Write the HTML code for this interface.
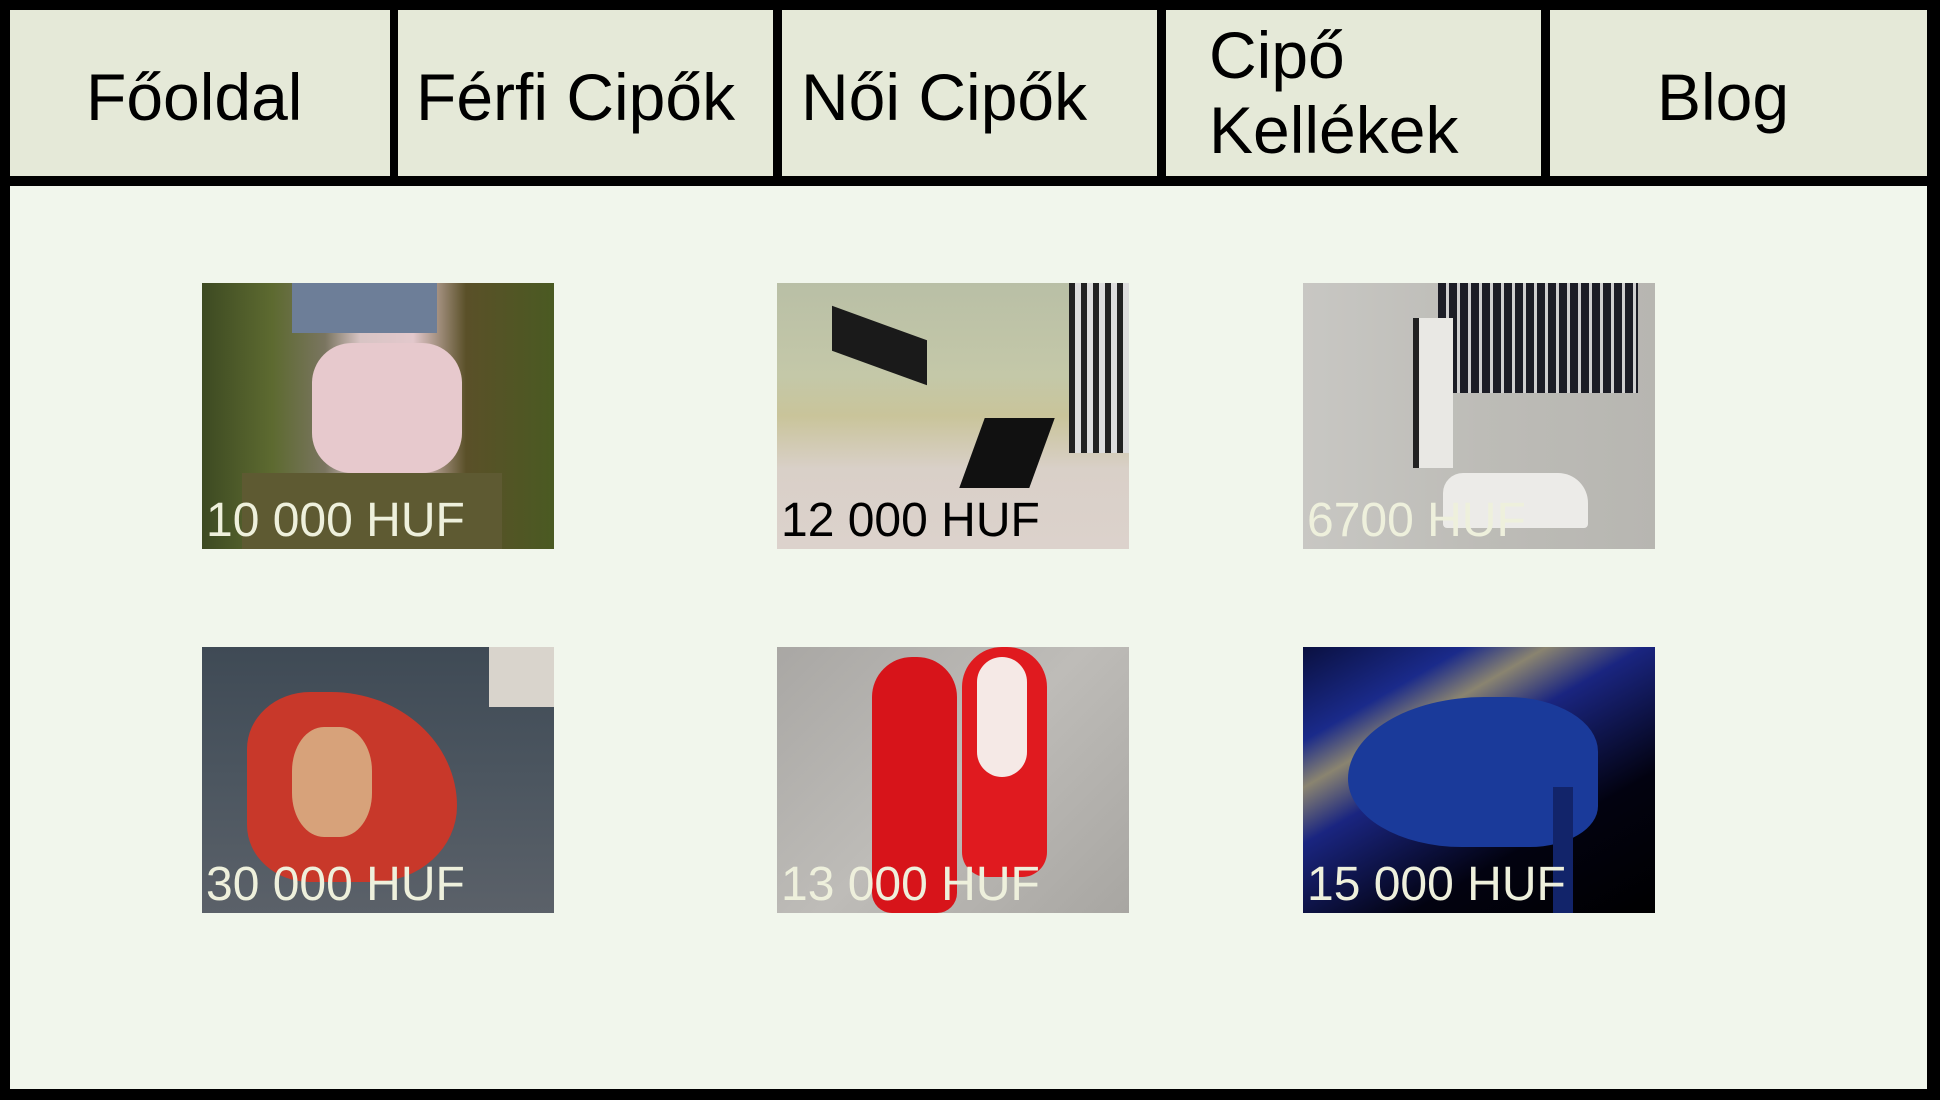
<!DOCTYPE html>
<html><head><meta charset="utf-8"><style>
*{margin:0;padding:0;box-sizing:border-box}
html,body{width:1940px;height:1100px;overflow:hidden;background:#000}
.frame{position:absolute;left:10px;top:10px;width:1917px;height:1079px;background:#000}
.main{position:absolute;left:0;top:176px;width:1917px;height:903px;background:#f1f6ec}
.nav{position:absolute;top:0;height:166px;background:#e5e9d8;font-family:"Liberation Sans",sans-serif;font-size:66px;color:#000;white-space:nowrap}
.nav span{position:absolute;top:50px;line-height:75px}
.bar{position:absolute;left:0;top:166px;width:1917px;height:10px;background:#000}
.img{position:absolute;width:352px;height:266px;overflow:hidden}
.p{position:absolute;left:4px;top:210px;font-family:"Liberation Sans",sans-serif;font-size:48px;color:#eef0dc;white-space:nowrap}
</style></head><body>
<div class="frame">
  <div class="nav" style="left:0;width:380px"><span style="left:76px">Főoldal</span></div>
  <div class="nav" style="left:388px;width:375px"><span style="left:18px">Férfi Cipők</span></div>
  <div class="nav" style="left:772px;width:375px"><span style="left:19px">Női Cipők</span></div>
  <div class="nav" style="left:1156px;width:375px"><span style="left:43px;top:8px">Cipő<br>Kellékek</span></div>
  <div class="nav" style="left:1540px;width:377px"><span style="left:107px">Blog</span></div>
  <div class="bar"></div>
  <div class="main">

  <div class="img" style="left:192px;top:97px;background:linear-gradient(90deg,#3d4a22 0%,#5d6a30 20%,#7a7560 35%,#d8c4c4 45%,#e3c8cc 60%,#5a5028 75%,#4a5a22 100%)">
    <div style="position:absolute;left:90px;top:0;width:145px;height:50px;background:#6d7e98"></div>
    <div style="position:absolute;left:110px;top:60px;width:150px;height:130px;border-radius:40px;background:#e7c9cd"></div>
    <div style="position:absolute;left:40px;top:190px;width:260px;height:76px;background:#5e5a32"></div>
    <div class="p">10 000 HUF</div></div>

  <div class="img" style="left:767px;top:97px;background:linear-gradient(180deg,#b9bfa6 0%,#c4c8a8 35%,#c9c49a 50%,#d9d0c8 70%,#dcd2cc 100%)">
    <div style="position:absolute;left:55px;top:40px;width:95px;height:45px;background:#1a1a1a;transform:skewY(20deg)"></div>
    <div style="position:absolute;left:195px;top:135px;width:70px;height:70px;background:#111;transform:skewX(-20deg)"></div>
    <div style="position:absolute;right:0;top:0;width:60px;height:170px;background:repeating-linear-gradient(90deg,#222 0 6px,#ddd 6px 12px)"></div>
    <div class="p" style="color:#000">12 000 HUF</div></div>

  <div class="img" style="left:1293px;top:97px;background:linear-gradient(90deg,#c8c7c3,#bdbcb7 50%,#b7b6b1)">
    <div style="position:absolute;left:135px;top:0;width:200px;height:110px;background:repeating-linear-gradient(90deg,#1c1d26 0 8px,#cfcfcf 8px 11px)"></div>
    <div style="position:absolute;left:110px;top:35px;width:40px;height:150px;background:#e9e8e4;border-left:6px solid #222"></div>
    <div style="position:absolute;left:140px;top:190px;width:145px;height:55px;background:#ecebe8;border-radius:20px 30px 4px 4px"></div>
    <div class="p">6700 HUF</div></div>

  <div class="img" style="left:192px;top:461px;background:linear-gradient(180deg,#3f4a55 0%,#4c5660 50%,#5b6169 100%)">
    <div style="position:absolute;right:0;top:0;width:65px;height:60px;background:#d9d4cc"></div>
    <div style="position:absolute;left:45px;top:45px;width:210px;height:190px;background:#c8382a;border-radius:30% 60% 40% 30%"></div>
    <div style="position:absolute;left:90px;top:80px;width:80px;height:110px;background:#d7a27a;border-radius:40%"></div>
    <div class="p">30 000 HUF</div></div>

  <div class="img" style="left:767px;top:461px;background:linear-gradient(135deg,#a9a7a4,#bebcb8 50%,#a8a6a2)">
    <div style="position:absolute;left:95px;top:10px;width:85px;height:256px;background:#d7141a;border-radius:40px 40px 20px 20px"></div>
    <div style="position:absolute;left:185px;top:0;width:85px;height:230px;background:#e01a1f;border-radius:40px 40px 25px 25px"></div>
    <div style="position:absolute;left:200px;top:10px;width:50px;height:120px;background:#f5e9e6;border-radius:25px"></div>
    <div class="p">13 000 HUF</div></div>

  <div class="img" style="left:1293px;top:461px;background:linear-gradient(150deg,#0a1040 0%,#1a2a8a 20%,#8a8470 30%,#1a2580 42%,#020210 70%,#000 100%)">
    <div style="position:absolute;left:45px;top:50px;width:250px;height:150px;background:#1a3a9a;border-radius:60% 40% 30% 50%"></div>
    <div style="position:absolute;left:250px;top:140px;width:20px;height:126px;background:#12246a"></div>
    <div class="p">15 000 HUF</div></div>
  </div>
</div>
</body></html>
